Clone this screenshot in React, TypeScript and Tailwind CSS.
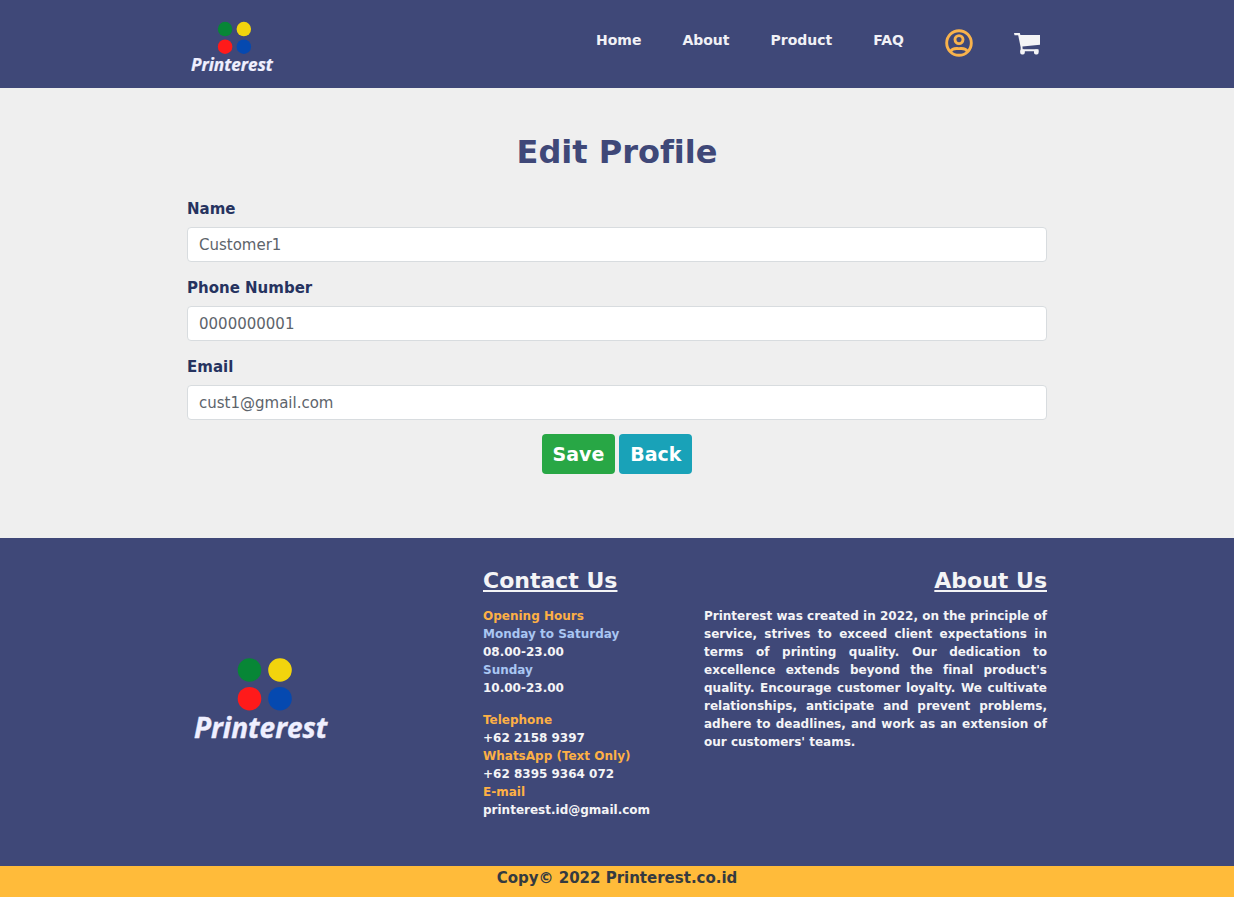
import { useId } from "react";

function Logo({ className }: { className: string }) {
  return (
    <svg viewBox="0 0 140 96" className={className} role="img" aria-label="Printerest">
      <circle cx="55.5" cy="14" r="11.8" fill="#078636" />
      <circle cx="86" cy="14" r="11.8" fill="#f2d40d" />
      <circle cx="55.5" cy="42.7" r="11.8" fill="#ff1a1a" />
      <circle cx="86" cy="42.7" r="11.8" fill="#0549b0" />
      <text
        x="0"
        y="82"
        fontSize="28"
        fontWeight="700"
        fontStyle="italic"
        fontFamily="'Open Sans', 'Noto Sans', sans-serif"
        fill="#efefff"
        stroke="#efefff"
        strokeWidth="0.4"
      >
        Printerest
      </text>
    </svg>
  );
}

function UserIcon() {
  return (
    <svg viewBox="0 0 28 28" className="size-7" fill="none" stroke="#f9b34c" strokeWidth="2.9" aria-hidden="true">
      <circle cx="14" cy="14" r="12.3" />
      <circle cx="14" cy="10.6" r="4" />
      <path d="M5.4 22.6C7.6 18.600 10.4 19.600 14 19.600s6.400-1 8.600 3" />
    </svg>
  );
}

function CartIcon() {
  return (
    <svg viewBox="0 0 27 24" className="h-6 w-[27px]" fill="#f4f4f6" aria-hidden="true">
      <path d="M0 1H5.800L6.400 2.900H26V12.700L8.400 14.500L8.700 17.200H24.500V19.200H6.500L6.700 15.500L4.200 3.200H0.500Z" />
      <rect x="6.200" y="17.500" width="4.600" height="5" rx="1.800" />
      <rect x="20" y="17.500" width="4.600" height="5" rx="1.800" />
    </svg>
  );
}

function Field({ label, type, value }: { label: string; type: string; value: string }) {
  const id = useId();
  return (
    <div>
      <label htmlFor={id} className="mb-2 block text-[15px] leading-[20px] font-bold text-[#26335f]">
        {label}
      </label>
      <input
        id={id}
        type={type}
        defaultValue={value}
        className="block h-[35px] w-full rounded border border-[#d8dcdf] bg-white px-[11px] text-[15px] text-[#5d646b]"
      />
    </div>
  );
}

const links = ["Home", "About", "Product", "FAQ"];

export default function App() {
  return (
    <div className="flex min-h-screen flex-col bg-[#efefef] font-['Verdana','DejaVu_Sans',sans-serif] [font-variant-ligatures:none]">
      <header className="bg-[#3f4878] px-4">
        <div className="mx-auto flex h-[88px] max-w-[860px] items-start justify-between pr-[6px] pl-1">
          <a href="#" className="mt-5">
            <Logo className="h-[60px] w-[86px]" />
          </a>
          <nav className="mt-7 flex items-start gap-[41px]">
            {links.map((link) => (
              <a key={link} href="#" className="text-[14px] leading-6 font-bold text-[#f1f1f6]">
                {link}
              </a>
            ))}
            <a href="#" aria-label="Profile" className="mt-px">
              <UserIcon />
            </a>
            <a href="#" aria-label="Cart" className="mt-1">
              <CartIcon />
            </a>
          </nav>
        </div>
      </header>

      <main className="px-4 pt-[44px] pb-16">
        <div className="mx-auto max-w-[860px]">
          <h1 className="mb-[27px] text-center text-[32px] leading-10 font-bold text-[#3f4878]">Edit Profile</h1>
          <form onSubmit={(e) => e.preventDefault()}>
            <div className="flex flex-col gap-4">
              <Field label="Name" type="text" value="Customer1" />
              <Field label="Phone Number" type="tel" value="0000000001" />
              <Field label="Email" type="email" value="cust1@gmail.com" />
            </div>
            <div className="mt-[14px] flex justify-center gap-1">
              <button
                type="submit"
                className="h-10 rounded bg-[#28a745] px-[11px] text-[19px] font-bold text-white"
              >
                Save
              </button>
              <button
                type="button"
                className="h-10 rounded bg-[#19a2b8] px-[11px] text-[19px] font-bold text-white"
              >
                Back
              </button>
            </div>
          </form>
        </div>
      </main>

      <footer className="flex grow flex-col bg-[#3f4878]">
        <div className="grow px-4 pt-[29px]">
          <div className="mx-auto grid max-w-[860px] grid-cols-[296px_1fr_343px] text-[12px] leading-[18px] font-bold text-[#f4f4f6]">
            <div className="self-center pt-[22px] pl-[7px]">
              <Logo className="h-[96px] w-[140px]" />
            </div>
            <section>
              <h2 className="mb-3 text-[22px] leading-7 underline decoration-2 underline-offset-2">Contact Us</h2>
              <p className="text-[#fdb045]">Opening Hours</p>
              <p className="text-[#a9c6f2]">Monday to Saturday</p>
              <p>08.00-23.00</p>
              <p className="text-[#a9c6f2]">Sunday</p>
              <p className="mb-[14px]">10.00-23.00</p>
              <p className="text-[#fdb045]">Telephone</p>
              <p>+62 2158 9397</p>
              <p className="text-[#fdb045]">WhatsApp (Text Only)</p>
              <p>+62 8395 9364 072</p>
              <p className="text-[#fdb045]">E-mail</p>
              <p>printerest.id@gmail.com</p>
            </section>
            <section>
              <h2 className="mb-3 text-right text-[22px] leading-7 underline decoration-2 underline-offset-2">
                About Us
              </h2>
              <p className="text-justify">
                Printerest was created in 2022, on the principle of service, strives to exceed client expectations in
                terms of printing quality. Our dedication to excellence extends beyond the final product's quality.
                Encourage customer loyalty. We cultivate relationships, anticipate and prevent problems, adhere to
                deadlines, and work as an extension of our customers' teams.
              </p>
            </section>
          </div>
        </div>
        <p className="bg-[#ffbb3a] pb-[7px] text-center text-[15px] leading-6 font-bold text-[#343a40]">
          Copy© 2022 Printerest.co.id
        </p>
      </footer>
    </div>
  );
}
